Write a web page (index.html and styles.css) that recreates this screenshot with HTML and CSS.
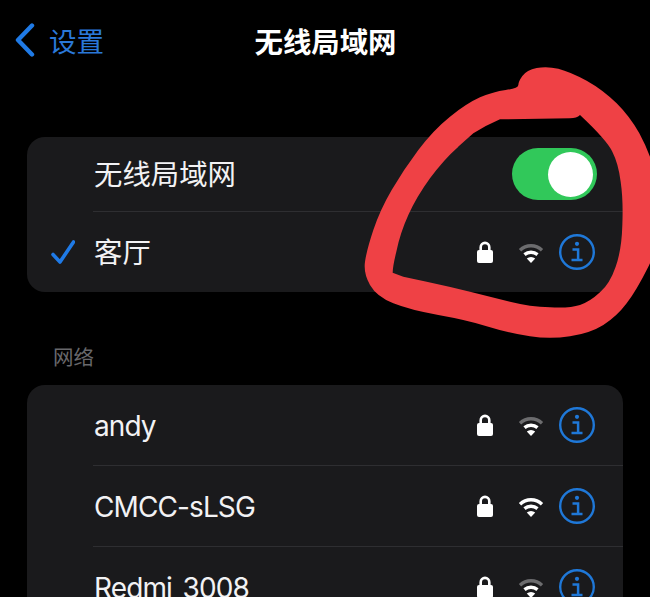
FILE: index.html
```html
<!DOCTYPE html>
<html lang="zh-CN">
<head>
    <meta charset="UTF-8">
    <meta name="viewport" content="width=device-width, initial-scale=1.0">
    <title>无线局域网</title>
    <link rel="stylesheet" href="styles.css">
</head>
<body>
    <svg width="0" height="0" class="defs">
        <defs>
            <symbol id="lock" viewBox="0 0 16 22">
                <path d="M3.7 10V6.2a4.3 4.3 0 0 1 8.6 0V10" fill="none" stroke="currentColor" stroke-width="2.6"/>
                <rect x="0" y="9" width="16" height="13" rx="2"/>
            </symbol>
            <symbol id="info" viewBox="0 0 36 36">
                <circle cx="18" cy="18" r="16.8" fill="none" stroke="currentColor" stroke-width="2.4"/>
                <circle cx="18" cy="9.8" r="2.1"/>
                <path d="M13.5 15.6h5.6v10M12.5 26h11" fill="none" stroke="currentColor" stroke-width="2.5"/>
            </symbol>
        </defs>
    </svg>

    <div class="nav">
        <div class="back">
            <svg class="chevron" width="20" height="34" viewBox="0 0 20 34">
                <path d="M17 2.5 3 17l14 14.5" fill="none" stroke="currentColor" stroke-width="4.4" stroke-linecap="round" stroke-linejoin="round"/>
            </svg>
            <span>设置</span>
        </div>
        <div class="title">无线局域网</div>
    </div>

    <div class="card first-card">
        <div class="row">
            <div class="check"></div>
            <div class="row-body short">
                <span class="name">无线局域网</span>
                <div class="toggle"><div class="knob"></div></div>
            </div>
        </div>
        <div class="row">
            <div class="check">
                <svg width="24" height="24" viewBox="0 0 24 24">
                    <path d="M2 14.5 9 22 22.5 2" fill="none" stroke="currentColor" stroke-width="3.6" stroke-linecap="round" stroke-linejoin="round"/>
                </svg>
            </div>
            <div class="row-body last">
                <span class="name">客厅</span>
                <div class="icons">
                    <svg class="lock" width="16" height="22"><use href="#lock"/></svg>
                    <svg class="wifi" width="26" height="21" viewBox="0 0 26 21">
                        <path class="arc-weak" d="M2 8.2a16 16 0 0 1 22 0"/>
                        <path class="arc" d="M6.5 12.6a10 10 0 0 1 13 0"/>
                        <path class="dot" d="M13 21 8.8 16.6a6 6 0 0 1 8.4 0z"/>
                    </svg>
                    <svg class="info" width="36" height="36"><use href="#info"/></svg>
                </div>
            </div>
        </div>
    </div>

    <div class="label">网络</div>

    <div class="card">
        <div class="row">
            <div class="check"></div>
            <div class="row-body">
                <span class="name latin">andy</span>
                <div class="icons">
                    <svg class="lock" width="16" height="22"><use href="#lock"/></svg>
                    <svg class="wifi" width="26" height="21" viewBox="0 0 26 21">
                        <path class="arc-weak" d="M2 8.2a16 16 0 0 1 22 0"/>
                        <path class="arc" d="M6.5 12.6a10 10 0 0 1 13 0"/>
                        <path class="dot" d="M13 21 8.8 16.6a6 6 0 0 1 8.4 0z"/>
                    </svg>
                    <svg class="info" width="36" height="36"><use href="#info"/></svg>
                </div>
            </div>
        </div>
        <div class="row">
            <div class="check"></div>
            <div class="row-body">
                <span class="name latin">CMCC-sLSG</span>
                <div class="icons">
                    <svg class="lock" width="16" height="22"><use href="#lock"/></svg>
                    <svg class="wifi" width="26" height="21" viewBox="0 0 26 21">
                        <path class="arc" d="M2 8.2a16 16 0 0 1 22 0"/>
                        <path class="arc" d="M6.5 12.6a10 10 0 0 1 13 0"/>
                        <path class="dot" d="M13 21 8.8 16.6a6 6 0 0 1 8.4 0z"/>
                    </svg>
                    <svg class="info" width="36" height="36"><use href="#info"/></svg>
                </div>
            </div>
        </div>
        <div class="row">
            <div class="check"></div>
            <div class="row-body last">
                <span class="name latin">Redmi_3008</span>
                <div class="icons">
                    <svg class="lock" width="16" height="22"><use href="#lock"/></svg>
                    <svg class="wifi" width="26" height="21" viewBox="0 0 26 21">
                        <path class="arc-weak" d="M2 8.2a16 16 0 0 1 22 0"/>
                        <path class="arc" d="M6.5 12.6a10 10 0 0 1 13 0"/>
                        <path class="dot" d="M13 21 8.8 16.6a6 6 0 0 1 8.4 0z"/>
                    </svg>
                    <svg class="info" width="36" height="36"><use href="#info"/></svg>
                </div>
            </div>
        </div>
    </div>

    <!-- red marker scribble drawn over the screenshot -->
    <svg class="scribble" width="300" height="300" viewBox="0 0 900 900">
        <path fill-rule="evenodd" d="M505 105Q505 95 517 78Q530 60 560 54Q590 48 625 56Q660 65 710 92Q760 120 800 160Q840 200 868 250Q895 300 910 350Q930 400 930 480Q930 580 895 650Q860 720 830 760Q800 800 760 825Q720 850 660 859Q600 868 540 859Q480 850 415 830Q350 810 265 795Q180 780 130 760Q80 740 60 705Q40 670 45 635Q50 600 70 540Q90 480 125 420Q160 360 205 300Q250 240 300 200Q350 160 390 142Q430 125 467 120Q505 115 505 105Z
        M690 195Q680 205 660 205L450 208Q410 225 370 250Q325 290 325 290Q280 330 240 385Q200 440 175 495Q150 550 139 605Q128 650 128 668L160 680L230 695Q300 710 360 725Q420 740 480 755Q540 770 600 772Q660 775 690 765Q720 755 750 727Q780 700 797 650Q815 600 817 525Q820 450 812 395Q805 340 787 305Q770 270 690 195Z"/>
    </svg>
</body>
</html>
```

FILE: styles.css
```css
html, body {
    margin: 0;
    height: 597px;
    overflow: hidden;
    background: #000;
}
body {
    position: relative;
    font-family: Inter, "Noto Sans CJK SC", sans-serif;
    color: #f2f2f4;
}
.defs {
    display: block;
    height: 0;
}
.nav {
    display: grid;
    grid-template-columns: 1fr auto 1fr;
    align-items: center;
    height: 80px;
    padding-left: 15px;
    padding-right: 14px;
}
.back {
    display: flex;
    align-items: center;
    gap: 14px;
    color: #2a78d8;
    font-size: 27.5px;
}
.chevron {
    color: #1f7ae6;
}
.title {
    font-size: 28.4px;
    font-weight: 600;
    color: #fff;
}
.card {
    margin: 0 27px;
    background: #1a1a1c;
    border-radius: 18px;
    overflow: hidden;
}
.first-card {
    margin-top: 57px;
}
.label {
    margin: 53px 0 0 53px;
    height: 40px;
    font-size: 20.5px;
    line-height: 26px;
    color: #68686c;
}
.row {
    display: flex;
    align-items: stretch;
    padding-left: 24px;
}
.check {
    flex: none;
    width: 42px;
    display: flex;
    align-items: center;
    color: #1f7ae6;
}
.row-body {
    flex: 1;
    display: flex;
    align-items: center;
    justify-content: space-between;
    height: 80px;
    padding-right: 28px;
    border-bottom: 1px solid #2e2e31;
}
.row-body.short {
    height: 74px;
    padding-right: 26px;
}
.row-body.last {
    border-bottom: none;
}
.name {
    font-size: 28.4px;
    line-height: 36px;
    padding-top: 2px;
    padding-left: 1px;
    white-space: nowrap;
}
.name.latin {
    font-size: 28px;
    letter-spacing: -0.9px;
}
.toggle {
    display: flex;
    justify-content: flex-end;
    align-items: center;
    width: 85px;
    height: 52px;
    padding-right: 4px;
    box-sizing: border-box;
    border-radius: 26px;
    background: #31c85a;
}
.knob {
    width: 45px;
    height: 45px;
    border-radius: 50%;
    background: #fff;
}
.icons {
    display: flex;
    align-items: center;
}
.lock {
    color: #fff;
    fill: #fff;
}
.wifi {
    margin-left: 25px;
    margin-right: 15px;
}
.arc, .arc-weak {
    fill: none;
    stroke-width: 3.4;
}
.arc {
    stroke: #fff;
}
.arc-weak {
    stroke: #6c6c6e;
}
.dot {
    fill: #fff;
}
.info {
    color: #1f78d8;
    fill: #1f78d8;
}
.scribble {
    position: absolute;
    left: 350px;
    top: 50px;
    fill: #ef4145;
    overflow: visible;
}
```
